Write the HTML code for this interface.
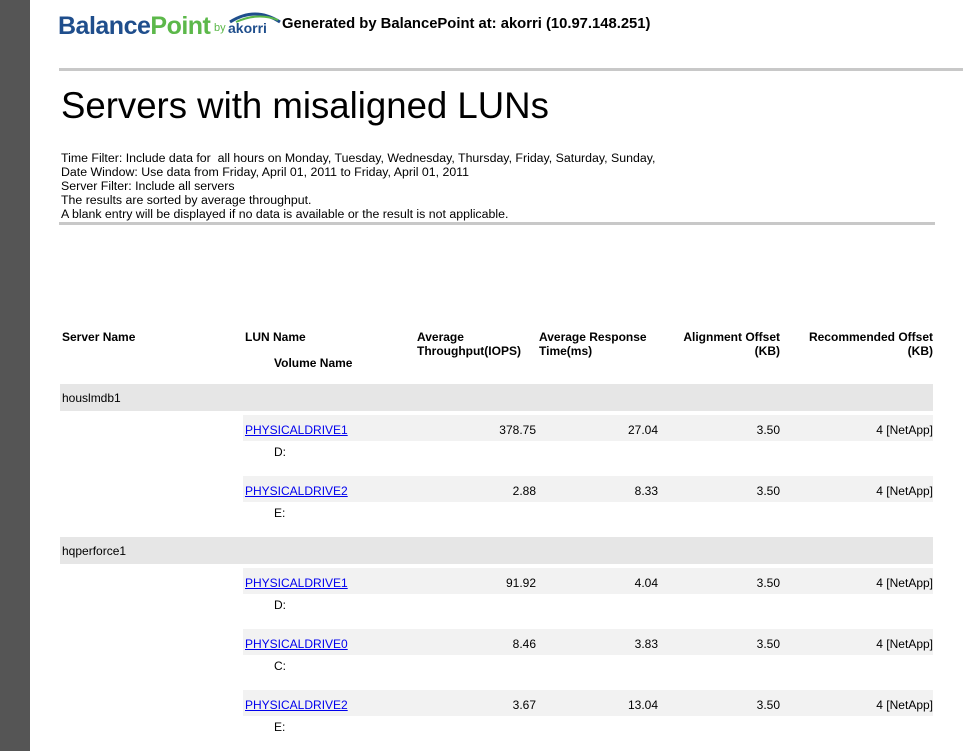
<!DOCTYPE html>
<html><head><style>
body{margin:0;width:963px;height:751px;overflow:hidden;background:#fff;font-family:"Liberation Sans",Arial,sans-serif;font-size:12px;color:#000;position:relative}
.a{position:absolute;white-space:nowrap}
.b{font-weight:bold}
.r{text-align:right}
a{color:#00e;text-decoration:underline}
</style></head><body>
<div class="a" style="left:0;top:0;width:30px;height:751px;background:#555"></div>
<div class="a" style="left:58px;top:12px;font-size:25px;font-weight:bold;letter-spacing:-0.5px"><span style="color:#1f4e8c">Balance</span><span style="color:#5cb84a">Point</span></div>
<div class="a" style="left:214px;top:22px;font-size:11px;color:#5cb84a">by</div>
<div class="a" style="left:228px;top:20px;font-size:14px;font-weight:bold;color:#1f4e8c">akorri</div>
<svg class="a" style="left:228px;top:10px" width="54" height="14"><path d="M2 12 Q27 -4 52 12" stroke="#1f4e8c" stroke-width="3" fill="none"/><path d="M8 12 Q30 2 50 10" stroke="#5cb84a" stroke-width="2" fill="none"/></svg>
<div class="a b" style="left:282px;top:16px;font-size:14.8px">Generated by BalancePoint at: akorri (10.97.148.251)</div>
<div class="a" style="left:59px;top:68px;width:904px;height:3px;background:#c8c8c8"></div>
<div class="a" style="left:61px;top:85px;font-size:36.6px">Servers with misaligned LUNs</div>
<div class="a" style="left:61px;top:151px;line-height:14px;font-size:12.35px">Time Filter: Include data for &nbsp;all hours on Monday, Tuesday, Wednesday, Thursday, Friday, Saturday, Sunday,<br>Date Window: Use data from Friday, April 01, 2011 to Friday, April 01, 2011<br>Server Filter: Include all servers<br>The results are sorted by average throughput.<br>A blank entry will be displayed if no data is available or the result is not applicable.</div>
<div class="a" style="left:59px;top:222px;width:876px;height:3px;background:#c8c8c8"></div>

<div class="a b" style="left:62px;top:330px">Server Name</div>
<div class="a b" style="left:245px;top:330px">LUN Name</div>
<div class="a b" style="left:274px;top:356px">Volume Name</div>
<div class="a b" style="left:417px;top:330px;line-height:14px">Average<br>Throughput(IOPS)</div>
<div class="a b" style="left:539px;top:330px;line-height:14px">Average Response<br>Time(ms)</div>
<div class="a b r" style="left:640px;width:140px;top:330px;line-height:14px">Alignment Offset<br>(KB)</div>
<div class="a b r" style="left:783px;width:150px;top:330px;line-height:14px">Recommended Offset<br>(KB)</div>

<div class="a" style="left:60px;top:384px;width:873px;height:27px;background:#e6e6e6"></div>
<div class="a" style="left:62px;top:391px">houslmdb1</div>
<div class="a" style="left:60px;top:537px;width:873px;height:27px;background:#e6e6e6"></div>
<div class="a" style="left:62px;top:544px">hqperforce1</div>

<div id="rows"></div>
<script>
var d=[[415,"PHYSICALDRIVE1","378.75","27.04","D:"],[476,"PHYSICALDRIVE2","2.88","8.33","E:"],[568,"PHYSICALDRIVE1","91.92","4.04","D:"],[629,"PHYSICALDRIVE0","8.46","3.83","C:"],[690,"PHYSICALDRIVE2","3.67","13.04","E:"]];
var h="";d.forEach(function(r){var t=r[0];
h+='<div class="a" style="left:243px;top:'+t+'px;width:690px;height:26px;background:#f2f2f2"></div>';
h+='<div class="a" style="left:245px;top:'+(t+8)+'px"><a>'+r[1]+'</a></div>';
h+='<div class="a r" style="left:436px;width:100px;top:'+(t+8)+'px">'+r[2]+'</div>';
h+='<div class="a r" style="left:558px;width:100px;top:'+(t+8)+'px">'+r[3]+'</div>';
h+='<div class="a r" style="left:680px;width:100px;top:'+(t+8)+'px">3.50</div>';
h+='<div class="a r" style="left:783px;width:150px;top:'+(t+8)+'px">4 [NetApp]</div>';
h+='<div class="a" style="left:274px;top:'+(t+30)+'px">'+r[4]+'</div>';});
document.getElementById("rows").innerHTML=h;
</script>
</body></html>
